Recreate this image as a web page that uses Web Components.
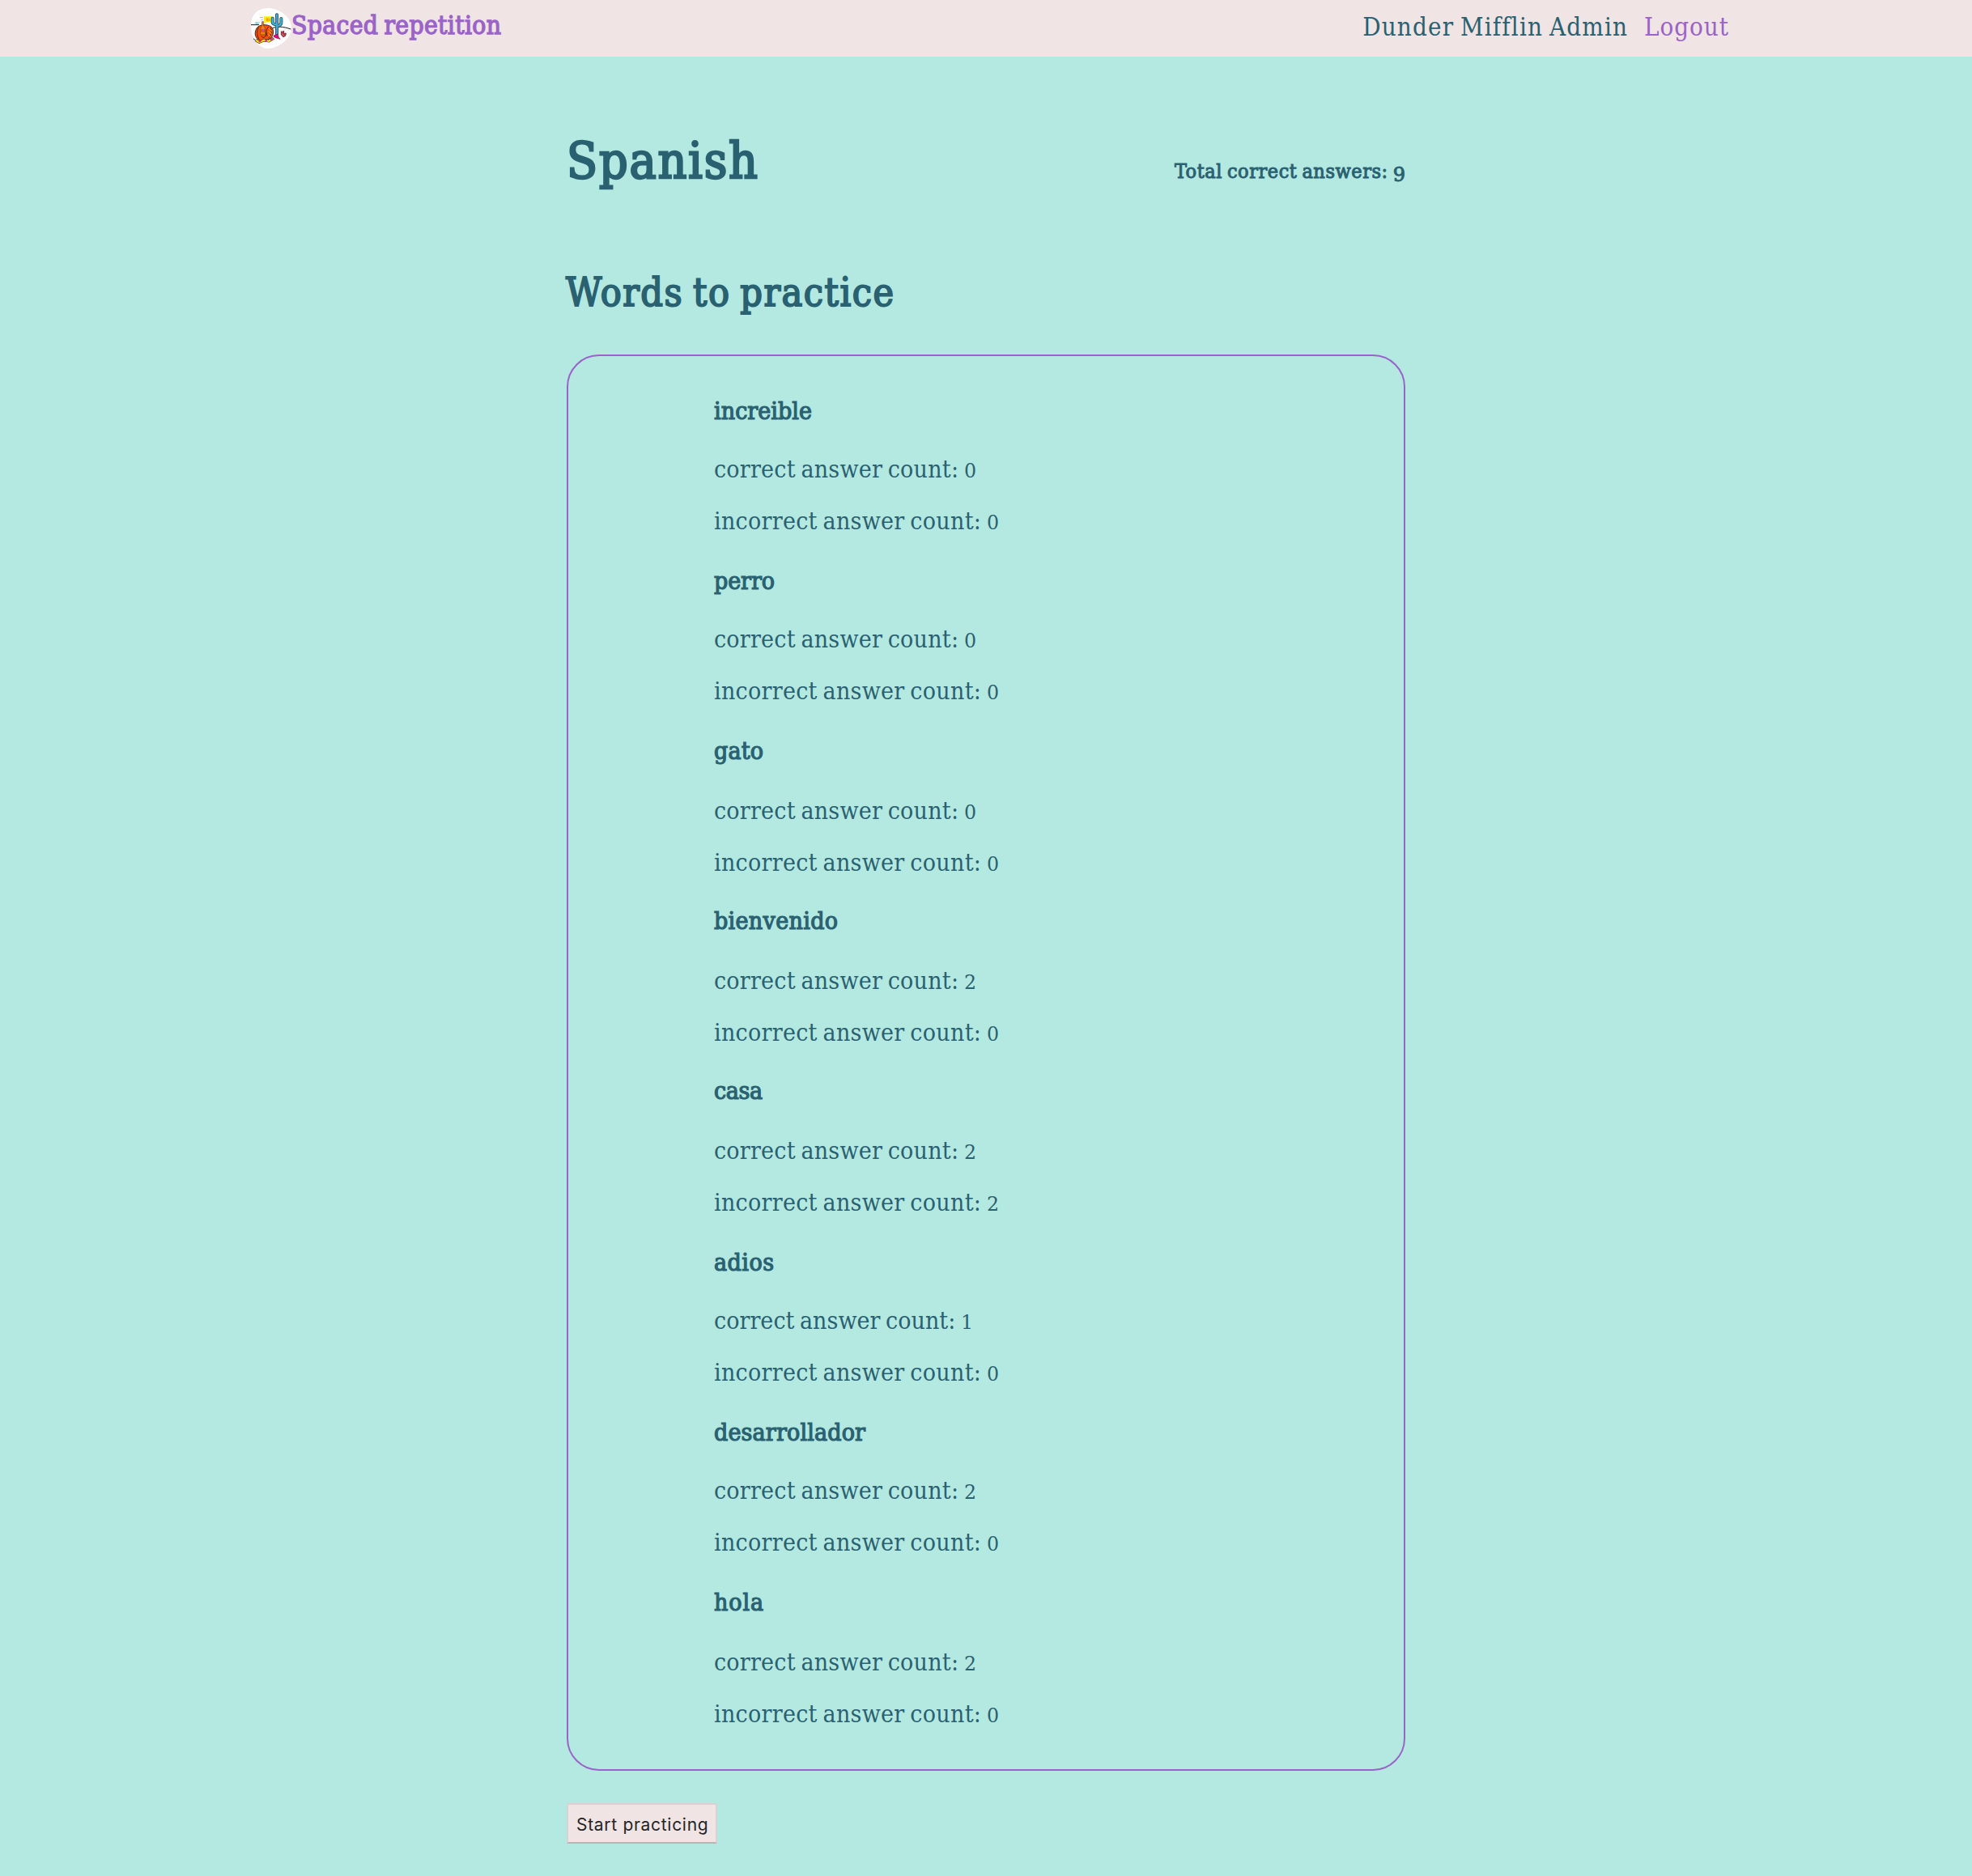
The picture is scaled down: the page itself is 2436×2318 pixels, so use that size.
<!DOCTYPE html>
<html lang="en">
<head>
<meta charset="utf-8">
<title>Spaced repetition</title>
<style>
  body {
    margin: 0;
    min-height: 2318px;
    background: #b4e9e2;
    color: #2a6171;
    font-family: "DejaVu Serif Condensed", "DejaVu Serif", serif;
    font-stretch: condensed;
  }
</style>
</head>
<body>
<practice-app></practice-app>
<script>
// One line of text, tracked so that it fills the given measure.
class TypeLine extends HTMLElement {
  connectedCallback() {
    const root = this.attachShadow({ mode: 'open' });
    root.innerHTML = `<style>
      :host { display: block; white-space: nowrap; font-size: var(--size); line-height: var(--line, 40px); word-spacing: -.07em; width: max-content; }
      :host([heavy]) { -webkit-text-stroke: calc(var(--size) * .04) currentColor; }
      ::slotted(b) { font-family: "DejaVu Serif", serif; font-stretch: normal; font-weight: inherit; font-size: .79em; line-height: 0; }
      ::slotted(b[low]) { font-size: .96em; position: relative; top: .17em; }
    </style><span><slot></slot></span>`;
    const target = Number(this.getAttribute('measure'));
    const natural = this.getBoundingClientRect().width;
    const count = this.textContent.length;
    if (target) {
      const track = (target - natural) / (count - 1);
      this.style.letterSpacing = track + 'px';
      this.style.marginRight = -track + 'px';
    }
  }
}
customElements.define('type-line', TypeLine);

class AppLogo extends HTMLElement {
  connectedCallback() {
    this.attachShadow({ mode: 'open' }).innerHTML = `<style>
      :host { display: block; width: 50px; height: 50px; } svg { display: block; }
    </style>
    <svg width="50" height="50" viewBox="0 0 150 150">
      <path d="M62 0C100 0 150 28 150 75C150 112 102 150 64 150C28 150 0 112 0 62C0 25 25 0 62 0Z" fill="#fff"/>
      <path d="M48 31H81V51H62L48 57Z" fill="#fbf00c"/>
      <path d="M56 44C58 36 64 38 62 43S55 48 65 47M67 38L69 48" fill="none" stroke="#ff9b16" stroke-width="4"/>
      <path d="M33 35H45M38 43H44" stroke="#c79bea" stroke-width="3"/>
      <path d="M14 57L19 52V60L24 52V60L32 52" fill="none" stroke="#6ed0da" stroke-width="3"/>
      <path d="M0 62H30M80 74C100 67 118 68 148 78" fill="none" stroke="#151515" stroke-width="3"/>
      <path d="M21 75C29 60 61 58 76 70C86 80 84 101 74 110C62 121 34 125 23 113C13 102 14 88 21 75Z" fill="#fb5108" stroke="#3c2419" stroke-width="3"/>
      <path d="M29 71C20 85 22 103 30 115M38 104C46 114 57 108 57 91M66 69C56 76 54 90 61 104M72 72C81 86 73 104 66 110" fill="none" stroke="#4c210d" stroke-width="3"/>
      <path d="M67 76L78 86M64 85L77 96M64 97L72 106" stroke="#ffc01b" stroke-width="3"/>
      <path d="M41 50H46V64L53 75V99H35V76L41 64Z" fill="#f38509" stroke="#69401c" stroke-width="2"/>
      <path d="M37 78H51V89H37Z" fill="#d9470b"/><path d="M42 76L46 80L43 88" fill="none" stroke="#d44de0" stroke-width="4"/>
      <path d="M18 119L31 126L48 119L66 122L82 112" fill="none" stroke="#50311c" stroke-width="11"/>
      <path d="M18 119L31 126L48 119L66 122L82 112" fill="none" stroke="#f2df13" stroke-width="7"/>
      <path d="M29 125L38 121M52 119L60 121M72 118L80 112" stroke="#e1239e" stroke-width="6"/>
      <path d="M96 25V96M80 38V53Q81 60 96 61M112 39V55Q111 64 96 67" fill="none" stroke="#244f67" stroke-width="12" stroke-linecap="round"/>
      <path d="M96 25V96M80 38V53Q81 60 96 61M112 39V55Q111 64 96 67" fill="none" stroke="#3ab5ca" stroke-width="7" stroke-linecap="round"/>
      <path d="M94 32V54M99 56V70M94 77V93" stroke="#7d72cd" stroke-width="3"/>
      <path d="M85 101L99 96L103 108L108 115L91 110L84 106Z" fill="#df087c" stroke="#7d164f" stroke-width="2"/>
      <path d="M112 86C119 91 120 83 122 84L121 94L130 93L128 103L120 107L112 99Z" fill="#e62439" stroke="#713b42" stroke-width="3"/>
      <path d="M116 95L121 102" stroke="#59b8ab" stroke-width="3"/>
      <path d="M9 113L18 121M79 108L87 116" stroke="#343027" stroke-width="3"/>
    </svg>`;
  }
}
customElements.define('app-logo', AppLogo);

class SiteHeader extends HTMLElement {
  connectedCallback() {
    this.attachShadow({ mode: 'open' }).innerHTML = `<style>
      :host { display: flex; box-sizing: border-box; height: 70px; padding: 10px 301px 0 310px; justify-content: space-between; background: #f0e4e4; }
      a { color: #9a63c8; text-decoration: none; }
      .brand, nav { display: flex; }
      .brand type-line { --size: 31.5px; margin-top: 1px; }
      nav { gap: 21px; padding-top: 3px; } nav type-line { --size: 31px; }
    </style>
    <a class="brand" href="#"><app-logo></app-logo><type-line heavy measure="259">Spaced repetition</type-line></a>
    <nav><type-line measure="326">Dunder Mifflin Admin</type-line><a href="#"><type-line measure="104">Logout</type-line></a></nav>`;
  }
}
customElements.define('site-header', SiteHeader);

class WordEntry extends HTMLElement {
  connectedCallback() {
    const a = this.getAttribute.bind(this);
    this.attachShadow({ mode: 'open' }).innerHTML = `<style>
      :host { display: flex; flex-direction: column; }
      type-line { --size: 30px; }
      h4, p { margin: 0; font-weight: 400; }
      h4 { padding-bottom: ${a('lead')}px; }
      p + p { padding-top: 24px; }
    </style>
    <h4><type-line heavy measure="${a('measure')}">${a('word')}</type-line></h4>
    <p><type-line measure="${a('right') === '1' ? 320 : 324}">correct answer count: <b>${a('right')}</b></type-line></p>
    <p><type-line measure="352">incorrect answer count: <b>${a('wrong')}</b></type-line></p>`;
  }
}
customElements.define('word-entry', WordEntry);

class WordList extends HTMLElement {
  connectedCallback() {
    this.attachShadow({ mode: 'open' }).innerHTML = `<style>
      :host { display: flex; flex-direction: column; box-sizing: border-box; height: 1750px; padding: 48px 0 0 180px; border: 2px solid #9a63c8; border-radius: 40px; }
    </style><slot></slot>`;
  }
}
customElements.define('word-list', WordList);

class ActionButton extends HTMLElement {
  connectedCallback() {
    this.attachShadow({ mode: 'open' }).innerHTML = `<style>
      :host { display: block; }
      button { display: flex; box-sizing: border-box; width: 186px; height: 50px; padding: 5px 0 0 10px; border: 2px solid #d9d2d2; border-bottom-color: #bab5b5; border-radius: 1px; background: #f0e4e4; color: #252525; font-family: Inter, sans-serif; font-stretch: normal; text-align: left; }
      span { font-size: 21px; line-height: 40px; letter-spacing: .7px; white-space: nowrap; }
    </style><button><span><slot></slot></span></button>`;
  }
}
customElements.define('action-button', ActionButton);

class PracticeApp extends HTMLElement {
  connectedCallback() {
    const words = [
      ['increible', 0, 0, 121, 32, 34], ['perro', 0, 0, 75, 32, 34], ['gato', 0, 0, 61, 34, 32],
      ['bienvenido', 2, 0, 153, 34, 32], ['casa', 2, 2, 60, 34, 34], ['adios', 1, 0, 74, 32, 34],
      ['desarrollador', 2, 0, 187, 32, 34], ['hola', 2, 0, 61, 34, 0]
    ];
    this.attachShadow({ mode: 'open' }).innerHTML = `<style>
      :host { display: block; }
      main { display: flex; flex-direction: column; box-sizing: border-box; width: 1036px; margin: 0 auto; padding-top: 89px; }
      h1, h2, h3 { margin: 0; font-weight: 400; }
      .top { display: flex; justify-content: space-between; align-items: baseline; }
      h1 type-line { --size: 62px; --line: 80px; }
      h3 type-line { --size: 25px; }
      h2 { margin: 92px 0 0 -1px; } h2 type-line { --size: 48px; --line: 60px; }
      word-list { margin-top: 47px; }
      action-button { margin-top: 40px; }
    </style>
    <site-header></site-header>
    <main>
      <div class="top"><h1><type-line heavy measure="236">Spanish</type-line></h1>
      <h3><type-line heavy measure="285">Total correct answers: <b low>9</b></type-line></h3></div>
      <h2><type-line heavy measure="405">Words to practice</type-line></h2>
      <word-list>${words.map(([w, r, x, m, lead, after]) =>
        `<word-entry word="${w}" right="${r}" wrong="${x}" measure="${m}" lead="${lead}" style="margin-bottom:${after}px"></word-entry>`).join('')}</word-list>
      <action-button>Start practicing</action-button>
    </main>`;
  }
}
customElements.define('practice-app', PracticeApp);
</script>
</body>
</html>
